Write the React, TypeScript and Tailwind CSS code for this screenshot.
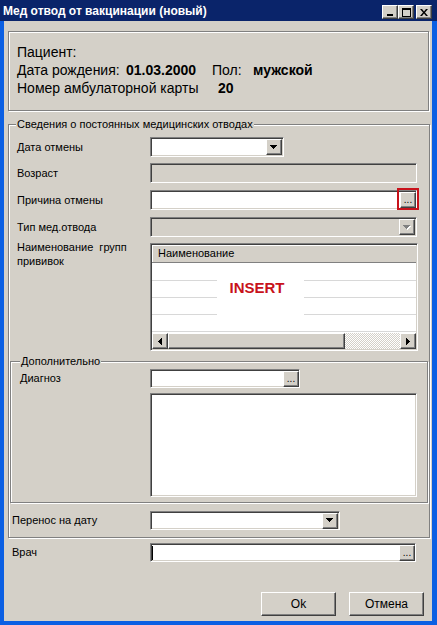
import type { ReactNode } from 'react';

const raised =
    'bg-[#d4d0c8] border border-t-white border-l-white border-r-[#404040] border-b-[#404040] shadow-[inset_-1px_-1px_0_#808080]';
const sunken =
    'border border-t-[#808080] border-l-[#808080] border-r-white border-b-white shadow-[inset_1px_1px_0_#404040,inset_-1px_-1px_0_#d4d0c8]';
const etched = 'border border-[#808080] shadow-[inset_1px_1px_0_#fff,1px_1px_0_#fff]';

function DownArrow({ disabled = false }: { disabled?: boolean }) {
    const d = 'M0 0h7v1H0zM1 1h5v1H1zM2 2h3v1H2zM3 3h1v1H3z';
    return (
        <svg width="8" height="5" viewBox="0 0 8 5" shapeRendering="crispEdges">
            {disabled && <path d={d} fill="#fff" transform="translate(1 1)" />}
            <path d={d} fill={disabled ? '#808080' : '#000'} />
        </svg>
    );
}

function SideArrow({ dir }: { dir: 'left' | 'right' }) {
    const d =
        dir === 'left'
            ? 'M3 0h1v7H3zM2 1h1v5H2zM1 2h1v3H1zM0 3h1v1H0z'
            : 'M0 0h1v7H0zM1 1h1v5H1zM2 2h1v3H2zM3 3h1v1H3z';
    return (
        <svg width="4" height="7" viewBox="0 0 4 7" shapeRendering="crispEdges">
            <path d={d} fill="#000" />
        </svg>
    );
}

function DotsButton() {
    return (
        <span className={`${raised} w-[16px] h-[16px] flex items-end justify-center pb-[2px] text-[10px] leading-none`}>
            ...
        </span>
    );
}

function Combo({ className = '', disabled = false }: { className?: string; disabled?: boolean }) {
    return (
        <div
            className={`${sunken} ${className} ${disabled ? 'bg-[#d4d0c8]' : 'bg-white'} flex items-center justify-end pr-px`}
        >
            <span className={`${raised} w-[16px] h-[16px] flex items-center justify-center`}>
                <DownArrow disabled={disabled} />
            </span>
        </div>
    );
}

function Picker({ className = '', marked = false, caret = false }: { className?: string; marked?: boolean; caret?: boolean }) {
    return (
        <div className={`${sunken} ${className} relative bg-white flex items-center`}>
            {caret && <span className="ml-px w-px h-[14px] bg-black" />}
            <span className="ml-auto">
                <DotsButton />
            </span>
            {/* red highlight round the picker button */}
            {marked && <span className="absolute right-[-3px] top-[-3px] w-[22px] h-[22px] border-2 border-[#c8121b]" />}
        </div>
    );
}

function Row({ label, children, className = '' }: { label: ReactNode; children: ReactNode; className?: string }) {
    return (
        <div className={`flex items-center ${className}`}>
            <span className="w-[133px] shrink-0">{label}</span>
            {children}
        </div>
    );
}

function TitleButton({ children }: { children: ReactNode }) {
    return <span className={`${raised} w-[16px] h-[14px] flex items-center justify-center`}>{children}</span>;
}

function TitleBar() {
    return (
        <div className="h-[21px] shrink-0 bg-[#0a246a] flex items-start justify-between pl-[3px] pr-[5px]">
            <span className="text-white font-bold text-[12px] leading-[22px]">Мед отвод от вакцинации (новый)</span>
            <div className="flex pt-[5px]">
                <TitleButton>
                    <svg width="8" height="7" viewBox="0 0 8 7" shapeRendering="crispEdges">
                        <rect x="1" y="5" width="6" height="2" fill="#000" />
                    </svg>
                </TitleButton>
                <TitleButton>
                    <svg width="9" height="9" viewBox="0 0 9 9" shapeRendering="crispEdges">
                        <path d="M0 0h9v2H0zM0 2h1v7H0zM8 2h1v7H8zM0 8h9v1H0z" fill="#000" />
                    </svg>
                </TitleButton>
                <span className="w-[2px]" />
                <TitleButton>
                    <svg width="8" height="7" viewBox="0 0 8 7">
                        <path d="M0 0h2l2 2.4L6 0h2L5 3.5 8 7H6L4 4.6 2 7H0l3-3.5z" fill="#000" />
                    </svg>
                </TitleButton>
            </div>
        </div>
    );
}

function GroupsGrid() {
    return (
        <div className={`${sunken} relative w-[268px] h-[108px] p-px bg-white flex flex-col`}>
            <div className="h-[18px] shrink-0 bg-[#d4d0c8] border-b border-[#808080] shadow-[inset_1px_1px_0_#fff] pl-[6px] leading-[17px]">
                Наименование
            </div>
            <div className="h-[18px] shrink-0 border-b border-[#d8d8d8]" />
            <div className="h-[17px] shrink-0 border-b border-[#d8d8d8]" />
            <div className="h-[17px] shrink-0 border-b border-[#d8d8d8]" />
            <div className="h-[17px] shrink-0 border-b border-[#d8d8d8]" />
            <div className="mt-px h-[16px] flex">
                <span className={`${raised} w-[16px] h-[16px] flex items-center justify-center`}>
                    <SideArrow dir="left" />
                </span>
                <span className={`${raised} w-[177px] h-[16px]`} />
                <span className="flex-1 bg-[repeating-conic-gradient(#d4d0c8_0_25%,#ffffff_0_50%)] bg-[length:2px_2px]" />
                <span className={`${raised} w-[16px] h-[16px] flex items-center justify-center`}>
                    <SideArrow dir="right" />
                </span>
            </div>
            <div className="absolute left-[66px] top-[24px] w-[87px] h-[50px] bg-white pt-[11px] pr-[7px] text-center text-[15px] leading-[18px] font-bold text-[#c8121b]">
                INSERT
            </div>
        </div>
    );
}

export default function App() {
    return (
        <div className="w-[437px] h-[625px] flex flex-col bg-[#0b5fe3] font-['Liberation_Sans',Arial,sans-serif] text-[11px] leading-[13px] text-black select-none">
            <TitleBar />

            <div className="flex-1 ml-[4px] mr-[5px] mb-[4px] bg-[#d4d0c8] flex flex-col pt-[10px] pl-[4px]">
                {/* Patient */}
                <div className={`${etched} w-[421px] h-[80px] shrink-0 pt-[11px] pl-[8px] text-[14px] leading-[18px]`}>
                    <div>Пациент:</div>
                    <div className="flex">
                        <span className="w-[109px]">Дата рождения:</span>
                        <b className="w-[86px]">01.03.2000</b>
                        <span className="w-[41px]">Пол:</span>
                        <b>мужской</b>
                    </div>
                    <div className="flex">
                        <span className="w-[201px]">Номер амбулаторной карты</span>
                        <b>20</b>
                    </div>
                </div>

                {/* Permanent exemptions */}
                <fieldset className={`${etched} mt-[7px] w-[422px] pb-[7px]`}>
                    <legend className="ml-[7px] px-px bg-[#d4d0c8] leading-[13px]">
                        Сведения о постоянных медицинских отводах
                    </legend>

                    <div className="pl-[8px]">
                        <Row label="Дата отмены" className="mt-[6px]">
                            <Combo className="w-[134px] h-[20px]" />
                        </Row>
                        <Row label="Возраст" className="mt-[6px]">
                            <div className={`${sunken} w-[267px] h-[20px] bg-[#d4d0c8]`} />
                        </Row>
                        <Row label="Причина отмены" className="mt-[7px]">
                            <Picker className="w-[267px] h-[20px]" marked />
                        </Row>
                        <Row label="Тип мед.отвода" className="mt-[7px]">
                            <Combo className="w-[267px] h-[20px]" disabled />
                        </Row>
                        <div className="flex items-start mt-[3px]">
                            <span className="w-[133px] shrink-0 leading-[14px] whitespace-pre">
                                {'Наименование  групп\nпрививок'}
                            </span>
                            <div className="mt-[3px]">
                                <GroupsGrid />
                            </div>
                        </div>
                    </div>

                    <fieldset className={`${etched} mt-[4px] mx-px pb-[5px]`}>
                        <legend className="ml-[9px] px-px bg-[#d4d0c8] leading-[13px]">Дополнительно</legend>
                        <div className="flex items-center mt-px pl-[9px]">
                            <span className="w-[130px] shrink-0">Диагноз</span>
                            <Picker className="w-[150px] h-[19px]" />
                        </div>
                        <div className={`${sunken} mt-[5px] ml-[139px] w-[267px] h-[104px] bg-white`} />
                    </fieldset>

                    <div className="flex items-center mt-[8px] pl-[3px]">
                        <span className="w-[138px] shrink-0">Перенос на дату</span>
                        <Combo className="w-[190px] h-[19px]" />
                    </div>
                </fieldset>

                <div className="flex items-center mt-[5px] pl-[4px]">
                    <span className="w-[138px] shrink-0">Врач</span>
                    <Picker className="w-[266px] h-[19px]" caret />
                </div>

                <div className="flex justify-end gap-[13px] mt-[30px] pr-[8px]">
                    <button className={`${raised} w-[75px] h-[24px] text-[12px]`}>Ok</button>
                    <button className={`${raised} w-[75px] h-[24px] text-[12px]`}>Отмена</button>
                </div>
            </div>
        </div>
    );
}
